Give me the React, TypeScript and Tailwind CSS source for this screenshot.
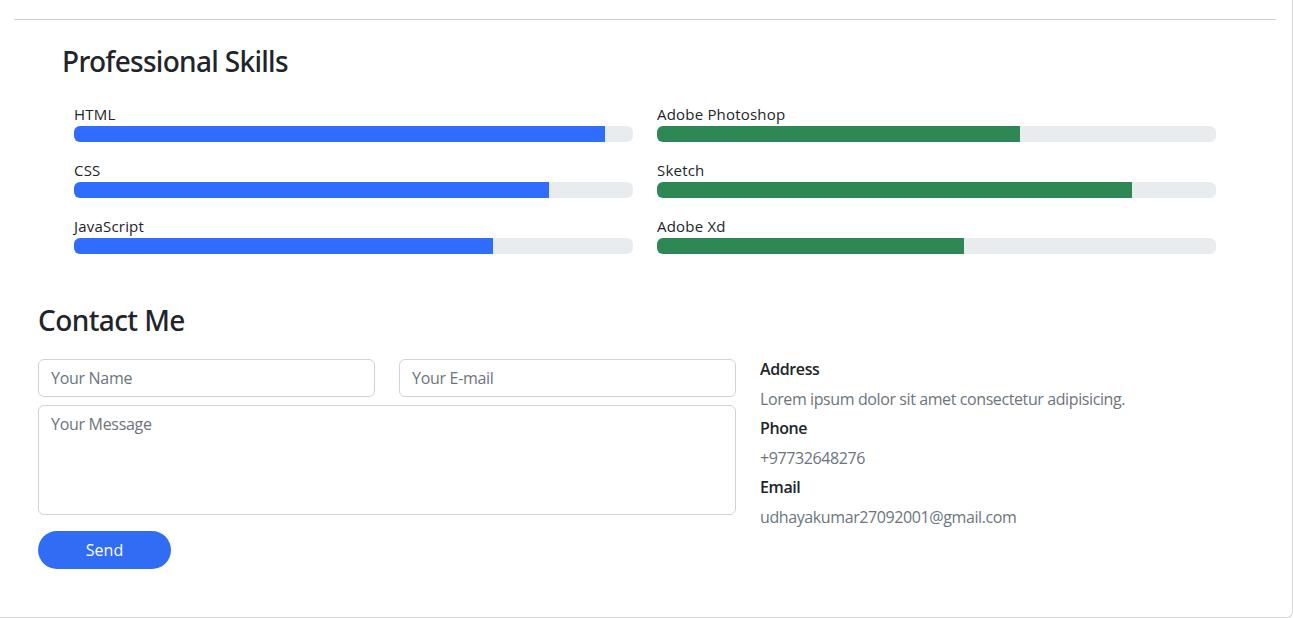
import React from "react";

const left = [
  { name: "HTML", v: 95 },
  { name: "CSS", v: 85 },
  { name: "JavaScript", v: 75 },
];
const right = [
  { name: "Adobe Photoshop", v: 65 },
  { name: "Sketch", v: 85 },
  { name: "Adobe Xd", v: 55 },
];

function Bar({ name, v, color }: { name: string; v: number; color: string }) {
  return (
    <div className="flex flex-col">
      <div className="text-[15px] leading-[24px] tracking-[0.2px] text-[#212529]">{name}</div>
      <div className="h-[16px] w-full rounded-[6px] bg-[#e9ecef] overflow-hidden">
        <div className={`h-full ${color}`} style={{ width: `${v}%` }} />
      </div>
    </div>
  );
}

export default function App() {
  return (
    <div
      className="w-[1293px] h-[618px] bg-white border-r border-b border-[#d4d4d4] rounded-br-[6px] overflow-hidden"
      style={{ fontFamily: '"Open Sans", "Noto Sans", sans-serif' }}
    >
      <div className="pt-[19px] pl-[14px] pr-[16px]">
        <div className="h-px bg-[#cfcfcf]" />
      </div>

      <section className="pl-[62px] w-[1228px] pt-[24px]">
        <h3
          className="text-[28px] leading-[34px] font-medium tracking-[-0.7px] text-[#212529]"
          style={{ fontFamily: '"Noto Sans", "Open Sans", sans-serif' }}
        >
          Professional Skills
        </h3>
        <div className="mt-[24px] grid grid-cols-2 gap-x-[24px] px-[12px]">
          <div className="flex flex-col gap-[16px]">
            {left.map((s) => (
              <Bar key={s.name} {...s} color="bg-[#306cfe]" />
            ))}
          </div>
          <div className="flex flex-col gap-[16px]">
            {right.map((s) => (
              <Bar key={s.name} {...s} color="bg-[#2e8856]" />
            ))}
          </div>
        </div>
      </section>

      <section className="pl-[38px] pt-[49px] w-[1264px]">
        <h3
          className="text-[28px] leading-[34px] font-medium tracking-[-0.6px] text-[#212529]"
          style={{ fontFamily: '"Noto Sans", "Open Sans", sans-serif' }}
        >
          Contact Me
        </h3>
        <div className="mt-[22px] flex gap-[24px]">
          <div className="w-[698px] flex flex-col">
            <div className="flex gap-[24px]">
              <input
                placeholder="Your Name"
                className="w-[337px] h-[38px] rounded-[6px] border border-[#ced4da] px-[12px] text-[16px] tracking-[-0.3px] text-[#212529] placeholder:text-[#6c757d] outline-none"
              />
              <input
                placeholder="Your E-mail"
                className="w-[337px] h-[38px] rounded-[6px] border border-[#ced4da] px-[12px] text-[16px] tracking-[-0.3px] text-[#212529] placeholder:text-[#6c757d] outline-none"
              />
            </div>
            <textarea
              placeholder="Your Message"
              className="mt-[8px] w-full h-[110px] resize-none rounded-[6px] border border-[#ced4da] px-[12px] py-[6px] text-[16px] tracking-[-0.3px] leading-[24px] text-[#212529] placeholder:text-[#6c757d] outline-none"
            />
            <div className="mt-[16px]">
              <button className="w-[133px] h-[38px] rounded-full bg-[#316cf4] text-white text-[16px]">Send</button>
            </div>
          </div>
          <div className="-mt-[2px] flex flex-col text-[16px] leading-[24px] tracking-[-0.4px]">
            <div className="font-semibold text-[#212529] mb-[6px]">Address</div>
            <div className="text-[#6c757d] mb-[5px]">Lorem ipsum dolor sit amet consectetur adipisicing.</div>
            <div className="font-semibold text-[#212529] mb-[6px]">Phone</div>
            <div className="text-[#6c757d] mb-[5px]">+97732648276</div>
            <div className="font-semibold text-[#212529] mb-[6px]">Email</div>
            <div className="text-[#6c757d]">udhayakumar27092001@gmail.com</div>
          </div>
        </div>
      </section>
    </div>
  );
}
